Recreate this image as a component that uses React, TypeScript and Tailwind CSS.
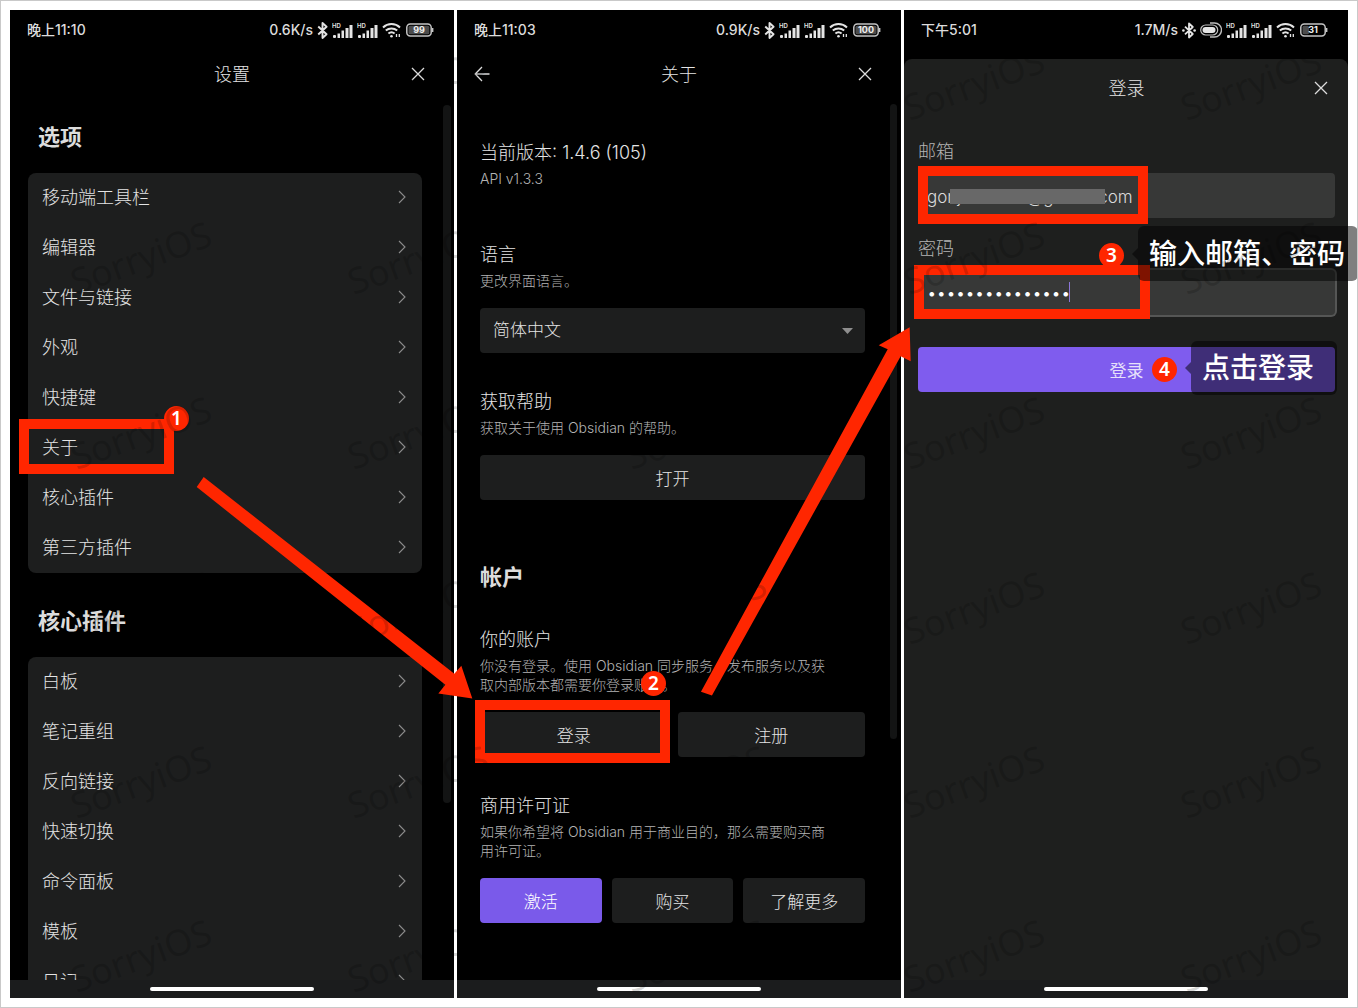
import type { ReactNode } from 'react'

const optionItems = ['移动端工具栏', '编辑器', '文件与链接', '外观', '快捷键', '关于', '核心插件', '第三方插件']
const pluginItems = ['白板', '笔记重组', '反向链接', '快速切换', '命令面板', '模板', '日记']

const watermarkCols = [140, 418, 696, 974, 1252]
const watermarkRows = [83, 258, 433, 608, 783, 957]

function BluetoothIcon({ active }: { active?: boolean }) {
  return (
    <svg width={active ? 14 : 11} height="17" viewBox={active ? '-2 0 14 16' : '0 0 10 16'} fill="none" aria-hidden>
      <path d="M1 4.2 8.8 11.5 5 15V1L8.8 4.5 1 11.8" stroke="#e4e4e4" strokeWidth="1.8" strokeLinejoin="round" />
      {active && (
        <g fill="#e4e4e4">
          <circle cx="-0.6" cy="8" r="1.3" />
          <circle cx="10.6" cy="8" r="1.3" />
        </g>
      )}
    </svg>
  )
}

function PaddleIcon() {
  return (
    <svg width="22" height="16" viewBox="0 0 22 16" fill="none" aria-hidden>
      <rect x="2.5" y="5" width="13" height="6" rx="3" fill="#e4e4e4" />
      <rect x="0.7" y="3" width="17" height="10" rx="5" stroke="#bdbdbd" strokeWidth="1.2" />
      <path d="M10 1h4.5a7 7 0 0 1 0 14H10" stroke="#bdbdbd" strokeWidth="1.4" />
    </svg>
  )
}

function SignalIcon() {
  return (
    <svg width="21" height="18" viewBox="0 -2 21 18" fill="#e4e4e4" aria-hidden>
      <text x="0" y="5" fontSize="6" fontWeight="600" fontFamily="Inter, sans-serif">
        HD
      </text>
      <rect x="1" y="12" width="3" height="3" rx="1" />
      <rect x="5.5" y="10.5" width="2.5" height="4.5" />
      <rect x="9.5" y="7.5" width="2.5" height="7.5" />
      <rect x="13.5" y="5" width="3" height="10" />
      <rect x="17.5" y="2" width="3" height="13" />
    </svg>
  )
}

function WifiIcon() {
  return (
    <svg width="20" height="16" viewBox="0 0 20 16" fill="none" stroke="#e4e4e4" strokeWidth="2" aria-hidden>
      <path d="M1 5.4a12.6 12.6 0 0 1 17 0" />
      <path d="M3.8 8.6a8.6 8.6 0 0 1 11.4 0" />
      <path d="M6.4 11.6a4.8 4.8 0 0 1 6.2 0" />
      <circle cx="9.5" cy="14.2" r="1.3" fill="#e4e4e4" stroke="none" />
      <path d="M14.5 12v3M17.3 12v3" strokeWidth="1.3" />
    </svg>
  )
}

function Battery({ level }: { level: number }) {
  return (
    <svg width="28" height="14" viewBox="0 0 28 14" aria-label={`${level}%`}>
      <rect x="0.8" y="1" width="24.4" height="12" rx="3.5" fill="none" stroke="#c4c4c4" strokeWidth="1.5" />
      <rect x="2.5" y="2.8" width={(21 * level) / 100} height="8.4" rx="1.5" fill="#4c4c4c" />
      <path d="M26.6 5v4" stroke="#c4c4c4" strokeWidth="1.6" />
      <text x="13" y="10.4" textAnchor="middle" fontSize="9" fontWeight="700" fontFamily="Inter, sans-serif" fill="#f0f0f0">
        {level}
      </text>
    </svg>
  )
}

type StatusBarProps = {
  time: string
  speed: string
  battery: number
  connected?: boolean
}

function StatusBar({ time, speed, battery, connected }: StatusBarProps) {
  return (
    <div className="flex h-10 shrink-0 items-center pr-5 pl-[17px] text-sm font-medium text-[#dcdcdc]">
      <span className="flex-1">{time}</span>
      <div className="flex items-center gap-1">
        <span>{speed}</span>
        <BluetoothIcon active={connected} />
        {connected && <PaddleIcon />}
        <SignalIcon />
        <SignalIcon />
        <WifiIcon />
        <Battery level={battery} />
      </div>
    </div>
  )
}

function CloseButton() {
  return (
    <button type="button" aria-label="关闭" className="flex size-6 items-center justify-center">
      <svg width="14" height="14" viewBox="0 0 14 14" fill="none" stroke="#dcdcdc" strokeWidth="1.3" aria-hidden>
        <path d="m1 1 12 12M13 1 1 13" />
      </svg>
    </button>
  )
}

function ScreenHeader({ title, back }: { title: string; back?: boolean }) {
  return (
    <header className="grid h-[50px] shrink-0 grid-cols-[24px_1fr_24px] items-center pr-6 pb-0.5 pl-[13px]">
      {back ? (
        <button type="button" aria-label="返回" className="flex size-6 items-center justify-center">
          <svg width="16" height="16" viewBox="0 0 16 16" fill="none" stroke="#dcdcdc" strokeWidth="1.3" aria-hidden>
            <path d="M15.5 8H1.5M8 1 1.2 8 8 15" />
          </svg>
        </button>
      ) : (
        <span />
      )}
      <h1 className="pl-[11px] text-center text-[18px] text-[#e4e4e4]">{title}</h1>
      <CloseButton />
    </header>
  )
}

function HomeBar() {
  return (
    <div className="flex h-[18px] shrink-0 items-center justify-center bg-[#1b1c1d]">
      <div className="h-1 w-[164px] rounded-full bg-white" />
    </div>
  )
}

function Badge({ children, className }: { children: ReactNode; className: string }) {
  return (
    <span
      className={`absolute z-10 flex size-[25px] items-center justify-center rounded-full bg-[#ff2600] font-['Noto_Sans',sans-serif] text-[19px] leading-none font-semibold text-white ${className}`}
    >
      {children}
    </span>
  )
}

function Frame({ className }: { className: string }) {
  return <span className={`pointer-events-none absolute border-10 border-[#ff2600] ${className}`} />
}

function Callout({ children, className }: { children: ReactNode; className: string }) {
  return (
    <span
      className={`absolute z-10 flex items-center rounded-md bg-black/50 pl-[11px] text-[28px] leading-none font-medium whitespace-nowrap text-white ${className}`}
    >
      <svg className="absolute right-full" width="6" height="12" viewBox="0 0 6 12" aria-hidden>
        <path d="M6 0v12L0 6z" fill="#000" fillOpacity="0.5" />
      </svg>
      {children}
    </span>
  )
}

function MenuCard({ items, marked }: { items: string[]; marked?: string }) {
  return (
    <ul className="mt-[21px] rounded-lg bg-[#1d1e1e]">
      {items.map((item) => (
        <li key={item} className="relative">
          <button
            type="button"
            className="flex h-[50px] w-full items-center justify-between pr-4 pb-0.5 pl-[14px] text-left text-[18px] text-[#e4e4e4]"
          >
            {item}
            <svg width="8" height="14" viewBox="0 0 8 14" fill="none" stroke="#8c8c8c" strokeWidth="1.1" aria-hidden>
              <path d="m1 1 6 6-6 6" />
            </svg>
          </button>
          {item === marked && (
            <>
              <Frame className="-top-1 -left-[9px] h-[55px] w-[155px]" />
              <Badge className="-top-[17px] left-[136px]">1</Badge>
            </>
          )}
        </li>
      ))}
    </ul>
  )
}

function SettingsScreen() {
  return (
    <section className="relative flex min-h-0 flex-col bg-black">
      <StatusBar time="晚上11:10" speed="0.6K/s" battery={99} />
      <ScreenHeader title="设置" />
      <div className="min-h-0 flex-1 overflow-hidden pt-[22px] pr-8 pl-[18px]">
        <h2 className="pl-[10px] text-[22px] leading-[30px] font-bold text-[#dcdcdc]">选项</h2>
        <MenuCard items={optionItems} marked="关于" />
        <h2 className="mt-[33px] pl-[10px] text-[22px] leading-[30px] font-bold text-[#dcdcdc]">核心插件</h2>
        <MenuCard items={pluginItems} />
      </div>
      <span className="absolute top-[95px] right-[3px] h-[698px] w-2 rounded-full bg-[#131414]" />
      <HomeBar />
    </section>
  )
}

type SettingProps = {
  name: string
  description: string
  children?: ReactNode
}

function Setting({ name, description, children }: SettingProps) {
  return (
    <div className="pb-9">
      <h3 className="text-[18px] leading-[25px] text-[#e4e4e4]">{name}</h3>
      <p className="mt-1 pr-7 text-sm leading-[19px] text-[#b4b4b4]">{description}</p>
      <div className="mt-[18px]">{children}</div>
    </div>
  )
}

function PlainButton({ children, primary }: { children: ReactNode; primary?: boolean }) {
  return (
    <button
      type="button"
      className={`h-[45px] w-full rounded-[4px] pt-1 text-[17px] ${primary ? 'bg-[#7a5aea] text-white' : 'bg-[#1d1e1e] text-[#e4e4e4]'}`}
    >
      {children}
    </button>
  )
}

function AboutScreen() {
  return (
    <section className="relative flex min-h-0 flex-col bg-black">
      <StatusBar time="晚上11:03" speed="0.9K/s" battery={100} />
      <ScreenHeader title="关于" back />
      <div className="min-h-0 flex-1 overflow-hidden pt-10 pr-9 pl-[23px]">
        <Setting name="当前版本: 1.4.6 (105)" description="API v1.3.3" />
        <Setting name="语言" description="更改界面语言。">
          <div className="relative">
            <select
              aria-label="语言"
              className="h-[45px] w-full appearance-none rounded-[4px] bg-[#1d1e1e] px-[13px] text-[17px] text-[#e4e4e4]"
            >
              <option>简体中文</option>
            </select>
            <svg className="absolute top-5 right-3" width="11" height="6" viewBox="0 0 11 6" aria-hidden>
              <path d="M0 0h11L5.5 6z" fill="#8e8e8e" />
            </svg>
          </div>
        </Setting>
        <Setting name="获取帮助" description="获取关于使用 Obsidian 的帮助。">
          <PlainButton>打开</PlainButton>
        </Setting>
        <h2 className="mt-[26px] mb-[35px] text-[22px] leading-[30px] font-bold text-[#dcdcdc]">帐户</h2>
        <Setting name="你的账户" description="你没有登录。使用 Obsidian 同步服务，发布服务以及获取内部版本都需要你登录账户。">
          <div className="grid grid-cols-2 gap-[10px]">
            <div className="relative">
              <PlainButton>登录</PlainButton>
              <Frame className="-top-3 -left-[5px] h-[63px] w-[195px]" />
              <Badge className="-top-[41px] left-[161px]">2</Badge>
            </div>
            <PlainButton>注册</PlainButton>
          </div>
        </Setting>
        <Setting name="商用许可证" description="如果你希望将 Obsidian 用于商业目的，那么需要购买商用许可证。">
          <div className="grid grid-cols-3 gap-[10px]">
            <PlainButton primary>激活</PlainButton>
            <PlainButton>购买</PlainButton>
            <PlainButton>了解更多</PlainButton>
          </div>
        </Setting>
      </div>
      <span className="absolute top-[94px] right-1 h-[635px] w-[7px] rounded-full bg-[#131414]" />
      <HomeBar />
    </section>
  )
}

function LoginScreen() {
  return (
    <section className="relative flex min-h-0 flex-col bg-black">
      <StatusBar time="下午5:01" speed="1.7M/s" battery={31} connected />
      <div className="mt-[9px] flex flex-1 flex-col rounded-t-lg bg-[#1e1f1e]">
        <header className="grid h-[58px] grid-cols-[24px_1fr_24px] items-center pr-[15px] pl-4">
          <span />
          <h1 className="text-center text-[18px] text-[#e4e4e4]">登录</h1>
          <CloseButton />
        </header>
        <form className="flex-1 pt-[22px] pr-[13px] pl-[14px]">
          <label htmlFor="email" className="block text-[18px] leading-[25px] text-[#b4b4b4]">
            邮箱
          </label>
          <div className="relative mt-[9px]">
            <input
              id="email"
              type="text"
              defaultValue="gonjaaaaaaa@gnnnn.com"
              className="h-[45px] w-full rounded-[4px] bg-[#373837] px-[9px] pt-0.5 text-[17px] text-[#dadada]"
            />
            <span className="absolute top-4 left-8 h-[15px] w-[155px] bg-[#686868]" />
            <Frame className="-top-[7px] left-0 h-[58px] w-[230px]" />
          </div>
          <label htmlFor="password" className="mt-[18px] block text-[18px] leading-[25px] text-[#b4b4b4]">
            密码
          </label>
          <div className="relative mt-[9px]">
            <input
              id="password"
              type="password"
              defaultValue="aaaaaaaaaaaaaaa"
              className="h-[45px] w-full rounded-[4px] bg-[#373837] px-[9px] text-[17px] text-white ring-2 ring-[#555655]"
            />
            <span className="absolute top-3 left-[151px] h-5 w-px bg-[#8b76d8]" />
            <Frame className="-top-[5px] -left-1 h-[54px] w-[236px]" />
            <Badge className="-top-[27px] left-[181px]">3</Badge>
            <Callout className="-top-11 left-[220px] h-[55px] pr-[13px]">输入邮箱、密码</Callout>
          </div>
          <div className="relative mt-8">
            <button
              type="submit"
              className="h-[45px] w-full rounded-[4px] bg-[#7f5cee] pt-1 text-[17px] font-normal text-[#e6e0fa]"
            >
              登录
            </button>
            <Badge className="top-[10px] left-[234px]">4</Badge>
            <Callout className="-top-[6px] left-[273px] h-[54px] pr-[23px]">点击登录</Callout>
          </div>
        </form>
        <HomeBar />
      </div>
    </section>
  )
}

function Arrows() {
  return (
    <svg
      className="pointer-events-none absolute inset-0 z-20 h-full w-full"
      viewBox="0 0 1358 1008"
      preserveAspectRatio="none"
      fill="#ff2600"
      aria-hidden
    >
      <path d="M203 477 454 674 461 666 472 699 438 694 445 685 196 487z" />
      <path d="M701 692 888 349 879 345 910 327 911 361 901 356 712 696z" />
    </svg>
  )
}

function Watermarks() {
  return (
    <div className="pointer-events-none absolute inset-0 z-30 overflow-hidden" aria-hidden>
      {watermarkRows.map((y) =>
        watermarkCols.map((x) => (
          <span
            key={`${x}-${y}`}
            className="absolute -translate-x-1/2 -translate-y-1/2 -rotate-20 font-['Noto_Sans',sans-serif] text-[36px] leading-none font-normal text-black/17"
            style={{ left: `${(x / 1358) * 100}%`, top: `${(y / 1008) * 100}%` }}
          >
            SorryiOS
          </span>
        )),
      )}
    </div>
  )
}

export default function App() {
  return (
    <main className="relative grid h-screen grid-cols-3 grid-rows-1 gap-[3px] overflow-hidden border border-[#c9c9c9] bg-white p-[9px] font-['Inter','Noto_Sans_CJK_SC',sans-serif] font-light">
      <SettingsScreen />
      <AboutScreen />
      <LoginScreen />
      <Arrows />
      <Watermarks />
    </main>
  )
}
